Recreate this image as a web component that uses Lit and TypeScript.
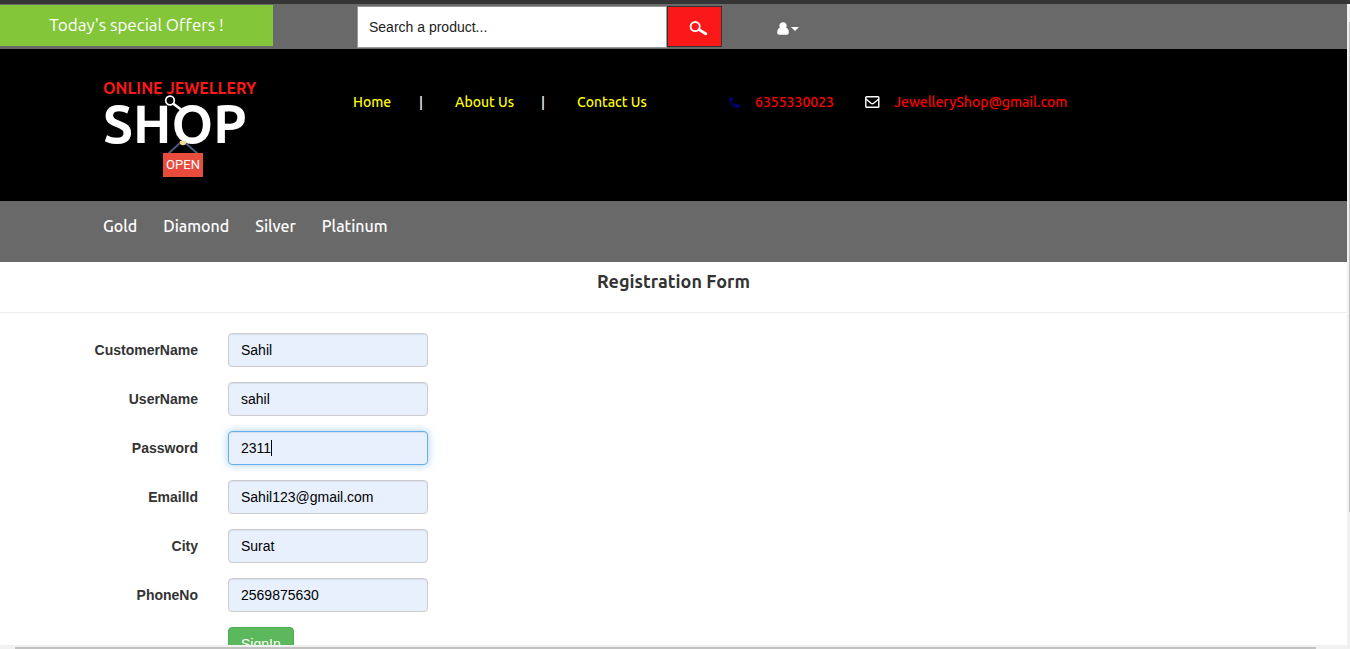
import { LitElement, html, css, svg } from "lit";
import { customElement, state } from "lit/decorators.js";

interface Field {
  id: string;
  label: string;
  value: string;
}

const FIELDS: Field[] = [
  { id: "customer", label: "CustomerName", value: "Sahil" },
  { id: "user", label: "UserName", value: "sahil" },
  { id: "password", label: "Password", value: "2311" },
  { id: "email", label: "EmailId", value: "Sahil123@gmail.com" },
  { id: "city", label: "City", value: "Surat" },
  { id: "phone", label: "PhoneNo", value: "2569875630" },
];

const CATEGORIES = ["Gold", "Diamond", "Silver", "Platinum"];

@customElement("shop-logo")
class ShopLogo extends LitElement {
  static styles = css`
    :host {
      display: block;
    }
    .logo {
      position: relative;
      display: block;
      width: 160px;
      color: #fff;
      text-decoration: none;
      white-space: nowrap;
    }
    .top {
      display: block;
      font: 700 16px/20px Ubuntu, "Noto Sans", sans-serif;
      color: #fa1818;
    }
    .name {
      display: block;
      font: 600 53px/52px Ubuntu, "Noto Sans", sans-serif;
    }
    .hook {
      position: absolute;
      left: 58px;
      top: 16px;
    }
    .sign {
      position: absolute;
      left: 60px;
      top: 63px;
    }
    .open {
      position: absolute;
      left: 60px;
      top: 75px;
      width: 40px;
      background: #e84c3d;
      color: #fff;
      font: 400 13px/24px "Liberation Sans Narrow", "Roboto", sans-serif;
      text-align: center;
    }
  `;

  render() {
    return html`<a class="logo" href="#">
      <span class="top">ONLINE JEWELLERY</span>
      <span class="name">SHOP</span>
      <svg class="hook" width="26" height="20" fill="none" stroke="#fff" aria-hidden="true">
        ${svg`<circle cx="9" cy="6.5" r="4.3" stroke-width="1.7"/><path d="M12 9.5L20 15.5" stroke-width="2.6"/>`}
      </svg>
      <svg class="sign" width="40" height="13" aria-hidden="true">
        ${svg`<path d="M5 13L18 1L20 0L35 13" fill="none" stroke="#4c5a7c" stroke-width="2"/><circle cx="20" cy="1" r="3.2" fill="#f5dc8c"/>`}
      </svg>
      <span class="open">OPEN</span>
    </a>`;
  }
}

@customElement("registration-form")
class RegistrationForm extends LitElement {
  static styles = css`
    :host {
      display: block;
      font: 14px/20px "Liberation Sans", Arial, sans-serif;
      color: #333;
    }
    * {
      box-sizing: border-box;
    }
    h3 {
      margin: 0;
      padding: 7px 0 19px;
      font: 700 18px/24px Ubuntu, "Noto Sans", sans-serif;
      text-align: center;
      border-bottom: 1px solid #eee;
    }
    form {
      display: grid;
      gap: 15px;
      padding: 20px 0 30px;
    }
    .row {
      display: grid;
      grid-template-columns: 198px 200px;
      column-gap: 30px;
      align-items: center;
    }
    label {
      font-weight: 700;
      text-align: right;
    }
    .control {
      position: relative;
      display: flex;
    }
    input {
      width: 100%;
      height: 34px;
      padding: 6px 12px;
      border: 1px solid #ccc;
      border-radius: 4px;
      background: #e8f0fe;
      box-shadow: inset 0 1px 1px rgba(0, 0, 0, 0.075);
      font: inherit;
      color: #000;
      outline: none;
    }
    .active input {
      border-color: #66afe9;
      box-shadow: inset 0 1px 1px rgba(0, 0, 0, 0.075), 0 0 8px rgba(102, 175, 233, 0.6);
    }
    .caret {
      position: absolute;
      left: 43px;
      top: 9px;
      width: 1px;
      height: 16px;
      background: #000;
    }
    button {
      grid-column: 2;
      justify-self: start;
      padding: 6px 12px;
      border: 1px solid #4cae4c;
      border-radius: 4px;
      background: #5cb85c;
      color: #fff;
      font: inherit;
    }
  `;

  @state() private active = "password";

  render() {
    return html`<h3>Registration Form</h3>
      <form @submit=${(e: Event) => e.preventDefault()}>
        ${FIELDS.map(
          (f) => html`<div class="row">
            <label for=${f.id}>${f.label}</label>
            <div class="control ${f.id === this.active ? "active" : ""}">
              <input id=${f.id} type="text" .value=${f.value} @input=${() => (this.active = "")} />
              ${f.id === this.active ? html`<span class="caret"></span>` : ""}
            </div>
          </div>`
        )}
        <div class="row"><button type="submit">SignIn</button></div>
      </form>`;
  }
}

@customElement("app-root")
class AppRoot extends LitElement {
  static styles = css`
    :host {
      display: grid;
      grid-template: 4px minmax(0, 1fr) 4px / minmax(0, 1fr) 3px;
      height: 100vh;
      overflow: hidden;
      background: #fff;
      font: 14px/20px Ubuntu, "Noto Sans", sans-serif;
    }
    * {
      box-sizing: border-box;
    }
    a {
      text-decoration: none;
    }
    .edge {
      grid-column: 1 / -1;
      background: #353535;
    }
    .view {
      overflow: hidden;
    }
    .vbar {
      padding: 18px 0 133px 2px;
      background: #f1f1f1;
    }
    .hbar {
      grid-column: 1 / -1;
      padding: 2px 34px 0 15px;
      background: #f1f1f1;
    }
    .thumb {
      height: 100%;
      background: #c1c1c1;
    }
    .offers {
      display: flex;
      align-items: flex-start;
      height: 45px;
      background: #696969;
    }
    .deal {
      width: 273px;
      height: 41px;
      margin: 1px 84px 0 0;
      background: #84c639;
      color: #fff;
      font-size: 17px;
      line-height: 40px;
      text-align: center;
    }
    .search {
      display: flex;
      align-items: flex-start;
      margin-top: 2px;
    }
    .search input {
      width: 310px;
      height: 42px;
      padding: 0 11px;
      border: 1px solid #999;
      font: 14px/20px "Liberation Sans", Arial, sans-serif;
      color: #212121;
      outline: none;
    }
    .search button {
      display: grid;
      place-items: center;
      width: 55px;
      height: 41px;
      padding: 4px 0 0 8px;
      border: 1px solid #333;
      background: #fa1818;
    }
    .user {
      display: flex;
      align-items: center;
      gap: 2px;
      margin: 18px 0 0 55px;
      padding: 0;
      border: 0;
      background: none;
    }
    .banner {
      display: flex;
      align-items: flex-start;
      height: 152px;
      padding: 29px 0 0 103px;
      background: #000;
      color: #fff;
      font-weight: 500;
    }
    .links {
      display: grid;
      grid-template-columns: 66px 36px 86px 36px auto;
      width: 376px;
      margin: 14px 0 0 90px;
      white-space: nowrap;
    }
    .links a {
      color: #ff0;
    }
    .contact {
      display: grid;
      grid-template-columns: 26px 110px 29px auto;
      align-items: center;
      margin-top: 14px;
    }
    .contact a {
      color: #f00;
    }
    .cats {
      display: flex;
      gap: 26px;
      height: 61px;
      padding: 13px 0 0 103px;
      background: #696969;
      font-size: 16px;
      font-weight: 500;
      line-height: 24px;
    }
    .cats a {
      color: #fff;
    }
  `;

  render() {
    return html`
      <div class="edge"></div>
      <div class="view">
        <header>
          <div class="offers">
            <div class="deal">Today's special Offers !</div>
            <form class="search" @submit=${(e: Event) => e.preventDefault()}>
              <input type="text" aria-label="Search" .value=${"Search a product..."} />
              <button type="submit" aria-label="Search">
                <svg width="19" height="15" fill="none" stroke="#fff" stroke-linecap="round">
                  <circle cx="6.2" cy="5.6" r="4.6" stroke-width="1.8" />
                  <path d="M10 8.6L16.8 12.8" stroke-width="2.8" />
                </svg>
              </button>
            </form>
            <button class="user" type="button" aria-label="Account">
              <svg width="12" height="13" fill="#fff">
                <circle cx="6" cy="3.8" r="3.6" />
                <path d="M2.6 5.8C.8 6.5.2 8.6.2 10.6C.2 12 1 12.8 2.2 12.8H9.8C11 12.8 11.8 12 11.8 10.6C11.8 8.6 11.2 6.5 9.4 5.8C7.4 7.6 4.6 7.6 2.6 5.8Z" />
              </svg>
              <svg width="8" height="4" fill="#fff"><path d="M0 0H8L4 4Z" /></svg>
            </button>
          </div>
          <div class="banner">
            <shop-logo></shop-logo>
            <nav class="links">
              <a href="#">Home</a><span>|</span><a href="#">About Us</a><span>|</span><a href="#">Contact Us</a>
            </nav>
            <div class="contact">
              <svg width="11" height="11" viewBox="0 0 11 11" fill="#00008b">
                <path d="M2.2.2C.6.6 0 1.7.3 3.1C1.1 6.8 4.2 10 7.8 10.8C9.3 11 10.4 10.4 10.9 8.9L10.7 8.3L8.2 7L6.8 8.5C4.9 7.7 3.3 6 2.5 4.2L4 2.8L2.8.3Z" />
              </svg>
              <a href="tel:6355330023">6355330023</a>
              <svg width="15" height="12" fill="none" stroke="#fff" stroke-width="1.4">
                <rect x=".8" y=".8" width="13" height="10.4" rx=".8" />
                <path d="M1 3L6 7.2Q7.3 8.2 8.6 7.2L13.8 3" />
              </svg>
              <a href="mailto:JewelleryShop@gmail.com">JewelleryShop@gmail.com</a>
            </div>
          </div>
          <nav class="cats">${CATEGORIES.map((c) => html`<a href="#">${c}</a>`)}</nav>
        </header>
        <main><registration-form></registration-form></main>
      </div>
      <div class="vbar"><div class="thumb"></div></div>
      <div class="hbar"><div class="thumb"></div></div>
    `;
  }
}
